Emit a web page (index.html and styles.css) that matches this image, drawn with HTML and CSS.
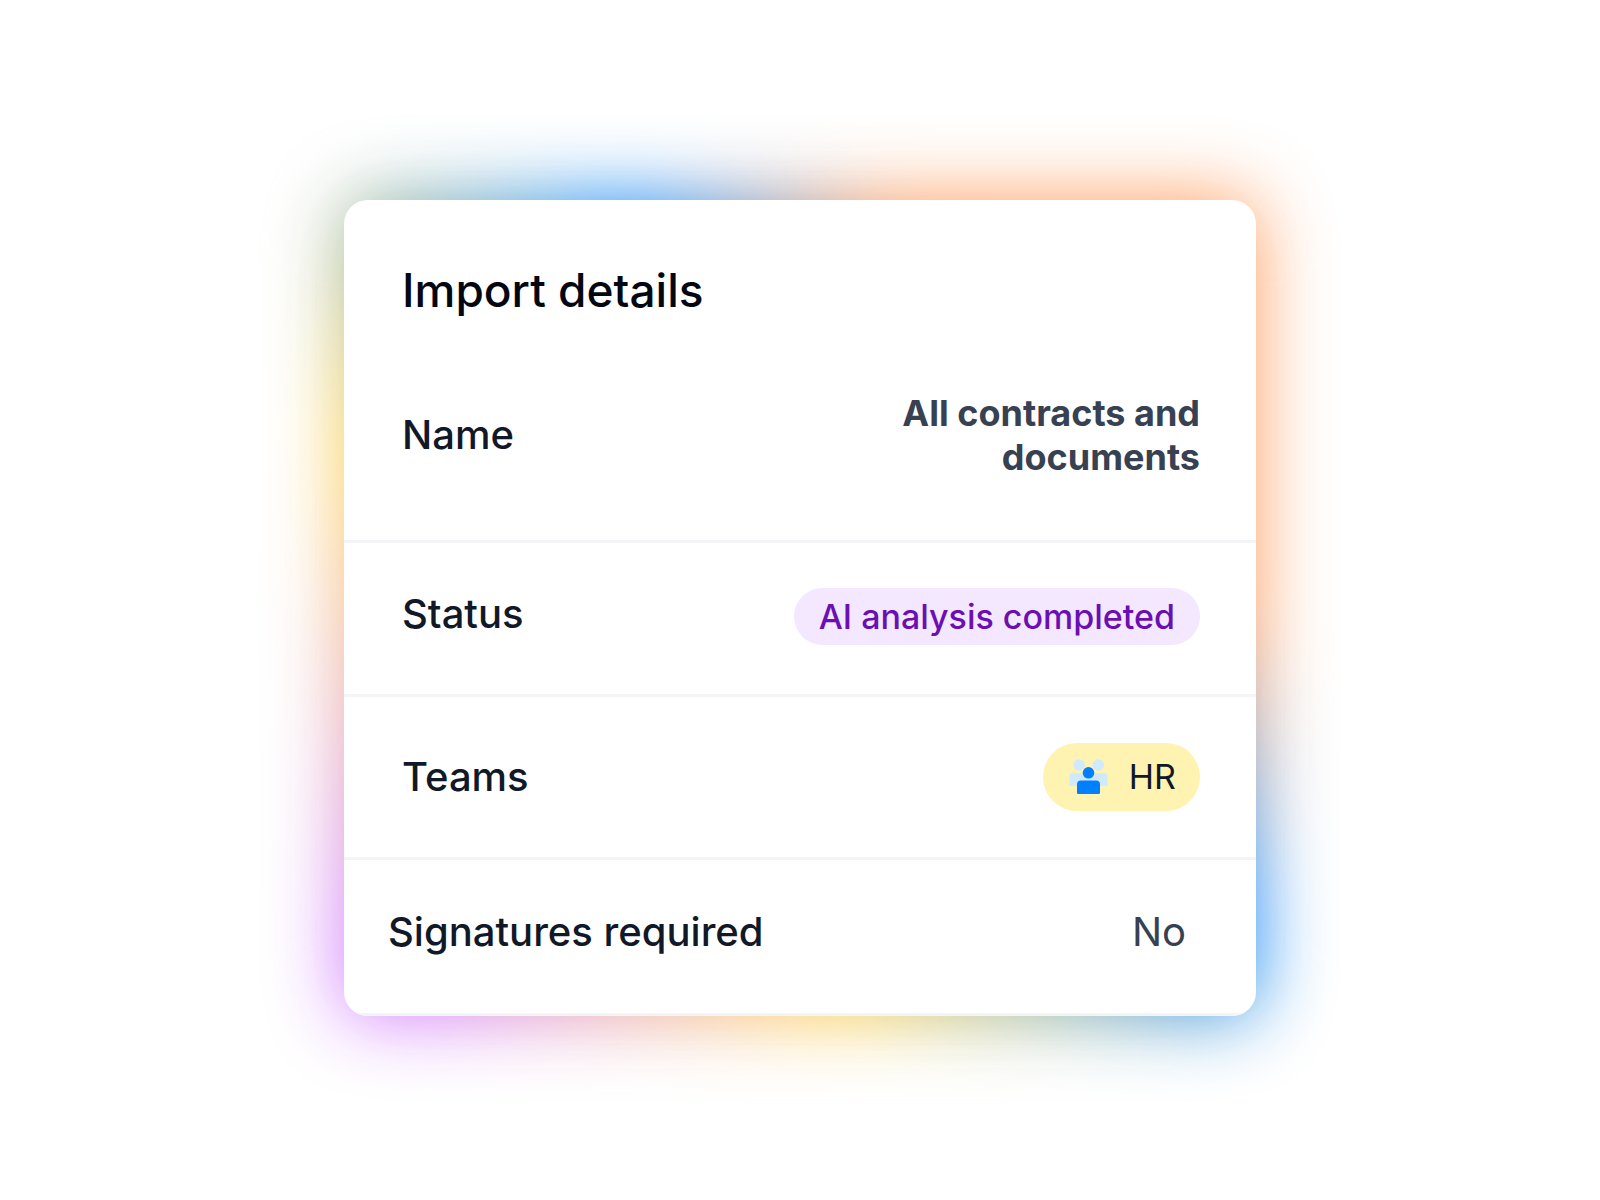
FILE: index.html
```
<!DOCTYPE html>
<html lang="en">
<head>
  <meta charset="UTF-8" />
  <meta name="viewport" content="width=device-width, initial-scale=1" />
  <title>Import details</title>
  <link rel="stylesheet" href="styles.css">
</head>
<body>
  <section class="card">
    <h1>Import details</h1>
    <dl class="details">
      <div class="row row-name">
        <dt>Name</dt>
        <dd class="name">All contracts and documents</dd>
      </div>
      <div class="row row-status">
        <dt>Status</dt>
        <dd><span class="badge">AI analysis completed</span></dd>
      </div>
      <div class="row row-teams">
        <dt>Teams</dt>
        <dd>
          <span class="team">
            <svg width="44" height="40" viewBox="0 0 44 40" aria-hidden="true">
              <g fill="#cfeaff">
                <circle cx="12" cy="8" r="5.8" />
                <circle cx="31.2" cy="8" r="5.8" />
                <path d="M6.3 16h30.4a4 4 0 0 1 4 4v7.7a1.3 1.3 0 0 1-1.3 1.3H3.6a1.3 1.3 0 0 1-1.3-1.3V20a4 4 0 0 1 4-4z" />
              </g>
              <g fill="#0080ff">
                <circle cx="21.5" cy="15.8" r="5.8" />
                <path d="M14 23.4h15a4 4 0 0 1 4 4v8.3a1.3 1.3 0 0 1-1.3 1.3H11.3a1.3 1.3 0 0 1-1.3-1.3v-8.3a4 4 0 0 1 4-4z" />
              </g>
            </svg>
            HR
          </span>
        </dd>
      </div>
      <div class="row row-signatures">
        <dt>Signatures required</dt>
        <dd>No</dd>
      </div>
    </dl>
  </section>
</body>
</html>
```

FILE: styles.css
```
* { box-sizing: border-box; }
body {
  background: #fff;
  color: #111827;
  font-family: Inter, sans-serif;
  margin: 0;
  padding: 24px 24px 8px;
  display: flex;
  justify-content: center;
  align-items: center;
  min-height: 100vh;
}
.card {
  position: relative;
  z-index: 0;
  max-width: 912px;
  width: 100%;
}
/* coloured glow behind the card */
.card::before {
  content: "";
  position: absolute;
  inset: -2px;
  z-index: -2;
  border-radius: 24px;
  background: linear-gradient(49deg, #cf74ff 6%, #ffcf43 32%, #0a86ff 60%, #ff9a5a 76%);
  filter: blur(38px);
  opacity: 0.95;
}
.card::after {
  content: "";
  position: absolute;
  inset: 0;
  z-index: -1;
  border-radius: 24px;
  background: #fff;
}
h1 {
  margin: 0;
  padding: 62px 58px 0;
  color: #030712;
  font-size: 46px;
  line-height: 56px;
  font-weight: 500;
}
.details {
  margin: 0;
  border-radius: 0 0 24px 24px;
  overflow: hidden;
}
.row {
  display: flex;
  justify-content: space-between;
  align-items: center;
  gap: 24px;
  padding: 46px 56px 46px 58px;
  border-bottom: 3px solid #f3f4f6;
}
.row-name { padding-top: 73px; padding-bottom: 61px; }
.row-status {
  align-items: flex-start;
  padding-top: 45px;
  padding-bottom: 49px;
}
.row-signatures { padding: 48px 70px 57px 44px; }
dt {
  font-size: 40px;
  line-height: 52px;
  font-weight: 500;
}
dd {
  margin: 0;
  color: #374151;
  font-size: 40px;
  line-height: 48px;
}
.row-signatures dt { line-height: 48px; }
.name {
  max-width: 320px;
  font-size: 36px;
  line-height: 44px;
  font-weight: 700;
  text-align: right;
}
.badge {
  display: block;
  padding: 6px 25px;
  border-radius: 29px;
  background: #f3e8ff;
  color: #6b0fb3;
  font-size: 34px;
  line-height: 45px;
  font-weight: 500;
}
.team {
  display: flex;
  align-items: center;
  gap: 18px;
  padding: 10px 24px;
  border-radius: 34px;
  background: #fef3b0;
  color: #111827;
  font-size: 34px;
  line-height: 48px;
}
```
